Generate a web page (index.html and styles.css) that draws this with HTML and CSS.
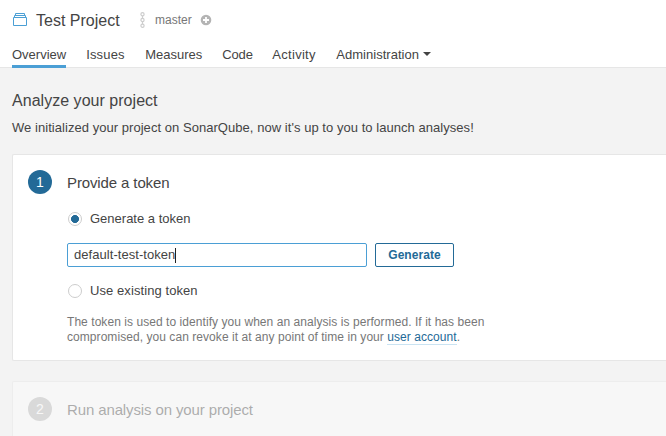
FILE: index.html
```html
<!DOCTYPE html>
<html lang="en">
<head>
<meta charset="utf-8">
<title>Test Project</title>
<link rel="stylesheet" href="styles.css">
</head>
<body>
<header class="header">
  <div class="project">
    <svg class="project-icon" width="16" height="16" viewBox="0 0 16 16" fill="none" stroke="#4b9fd5"><path d="M1.5 5.5h13v8h-13zM2.5 5v-1.5h11V5M3.5 3v-1.5h9V3"/></svg>
    <h1 class="project-name">Test Project</h1>
    <svg class="branch-icon" width="6" height="16" viewBox="0 0 6 16" fill="none" stroke="#cdcdcd" stroke-width="1.2"><circle cx="2.5" cy="2.2" r="1.6"/><circle cx="2.5" cy="8" r="1.6"/><circle cx="2.5" cy="13.8" r="1.6"/><path d="M2.5 4v2.3M2.5 9.7V12"/></svg>
    <span class="branch-name">master</span>
    <svg class="plus-icon" width="12" height="12" viewBox="0 0 12 12"><circle cx="6" cy="6" r="5.3" fill="#b4b4b4"/><path d="M6 3v6M3 6h6" stroke="#fff" stroke-width="1.8"/></svg>
  </div>
  <nav class="tabs">
    <a class="tab tab-active">Overview</a>
    <a class="tab tab-issues">Issues</a>
    <a class="tab">Measures</a>
    <a class="tab tab-code">Code</a>
    <a class="tab tab-activity">Activity</a>
    <a class="tab tab-admin">Administration<span class="caret"></span></a>
  </nav>
</header>
<main class="page">
  <h2 class="page-title">Analyze your project</h2>
  <p class="page-description">We initialized your project on SonarQube, now it's up to you to launch analyses!</p>
  <section class="step">
    <div class="step-number">1</div>
    <div class="step-body">
      <h3 class="step-title">Provide a token</h3>
      <div class="option option-first"><span class="radio radio-checked"></span>Generate a token</div>
      <div class="token-form">
        <div class="token-input">default-test-token<span class="cursor"></span></div>
        <button class="button">Generate</button>
      </div>
      <div class="option option-existing"><span class="radio"></span>Use existing token</div>
      <p class="note">The token is used to identify you when an analysis is performed. If it has been compromised, you can revoke it at any point of time in your <a class="link">user account</a>.</p>
    </div>
  </section>
  <section class="step step-disabled">
    <div class="step-number">2</div>
    <div class="step-body"><h3 class="step-title">Run analysis on your project</h3></div>
  </section>
</main>
</body>
</html>
```
FILE: styles.css
```css
* { box-sizing: border-box; }
html, body { height: 100%; }
body {
  display: flex;
  flex-direction: column;
  margin: 0;
  background: #f3f3f3;
  color: #444;
  font: 13px/20px "Liberation Sans", Arial, sans-serif;
}
h1, h2, h3, p { margin: 0; font-weight: 400; }
.header { flex: none; height: 68px; background: #fff; border-bottom: 1px solid #e6e6e6; padding: 8px 12px 0; }
.project { display: flex; align-items: center; height: 24px; }
.project-name { font-size: 16px; line-height: 24px; margin-left: 8px; padding-top: 1px; }
.branch-icon { margin-left: 20px; }
.branch-name { margin-left: 9.5px; font-size: 12px; color: #777; }
.plus-icon { margin-left: 8px; }
.tabs { display: flex; gap: 20px; height: 36px; }
.tab { height: 36px; padding-top: 13px; border-bottom: 3px solid transparent; white-space: nowrap; }
.tab-active { border-color: #4b9fd5; }
.tab-issues { width: 39px; letter-spacing: .15px; }
.tab-code { width: 30px; letter-spacing: -.15px; }
.tab-activity { width: 44px; letter-spacing: .3px; }
.tab-admin { letter-spacing: .03px; }
.caret {
  display: inline-block;
  margin-left: 4px;
  vertical-align: 3px;
  border: 4px solid transparent;
  border-top-color: #444;
  border-bottom: 0;
}
.page { display: flex; flex: 1; flex-direction: column; padding: 21px 0 0 12px; }
.page-title { font-size: 16px; line-height: 24px; letter-spacing: .03px; }
.page-description { margin-top: 5px; letter-spacing: .045px; }
.step {
  display: flex;
  flex: none;
  height: 207px;
  margin-top: 16px;
  padding: 15px 0 15px 15px;
  background: #fff;
  border: 1px solid #e6e6e6;
  border-right: 0;
  border-radius: 2px 0 0 2px;
}
.step-number {
  width: 24px;
  height: 24px;
  margin-right: 15px;
  border-radius: 50%;
  background: #236a97;
  color: #fff;
  font-size: 14px;
  line-height: 24px;
  text-align: center;
}
.step-title { font-size: 15px; line-height: 24px; padding-top: 1px; letter-spacing: -.12px; }
.option { display: flex; align-items: center; height: 20px; }
.option-first { margin-top: 14px; }
.option-existing { letter-spacing: .08px; }
.radio {
  width: 14px;
  height: 14px;
  margin: 0 8px 0 1px;
  border: 1px solid #cdcdcd;
  border-radius: 50%;
}
.radio-checked { background: radial-gradient(circle, #236a97 3.7px, transparent 4.3px); }
.token-form { display: flex; gap: 8px; margin: 14px 0; }
.token-input {
  display: flex;
  align-items: center;
  width: 300px;
  height: 24px;
  padding: 0 6px;
  border: 1px solid #4b9fd5;
  border-radius: 2px;
  letter-spacing: .05px;
}
.cursor { width: 1px; height: 15px; background: #222; }
.button {
  width: 79px;
  height: 24px;
  padding: 0;
  background: #fff;
  border: 1px solid #236a97;
  border-radius: 2px;
  color: #236a97;
  font: bold 12px/22px "Liberation Sans", Arial, sans-serif;
  letter-spacing: .06px;
}
.note { width: 450px; margin-top: 14px; font-size: 12px; line-height: 15px; letter-spacing: .058px; color: #777; }
.link { color: #236a97; border-bottom: 1px solid #cae3f2; }
.step-disabled {
  flex: 1;
  height: auto;
  margin-top: 20px;
  padding-bottom: 0;
  border-bottom: 0;
  border-radius: 2px 0 0;
  opacity: .4;
}
.step-disabled .step-number { background: #b4b4b4; }
```
